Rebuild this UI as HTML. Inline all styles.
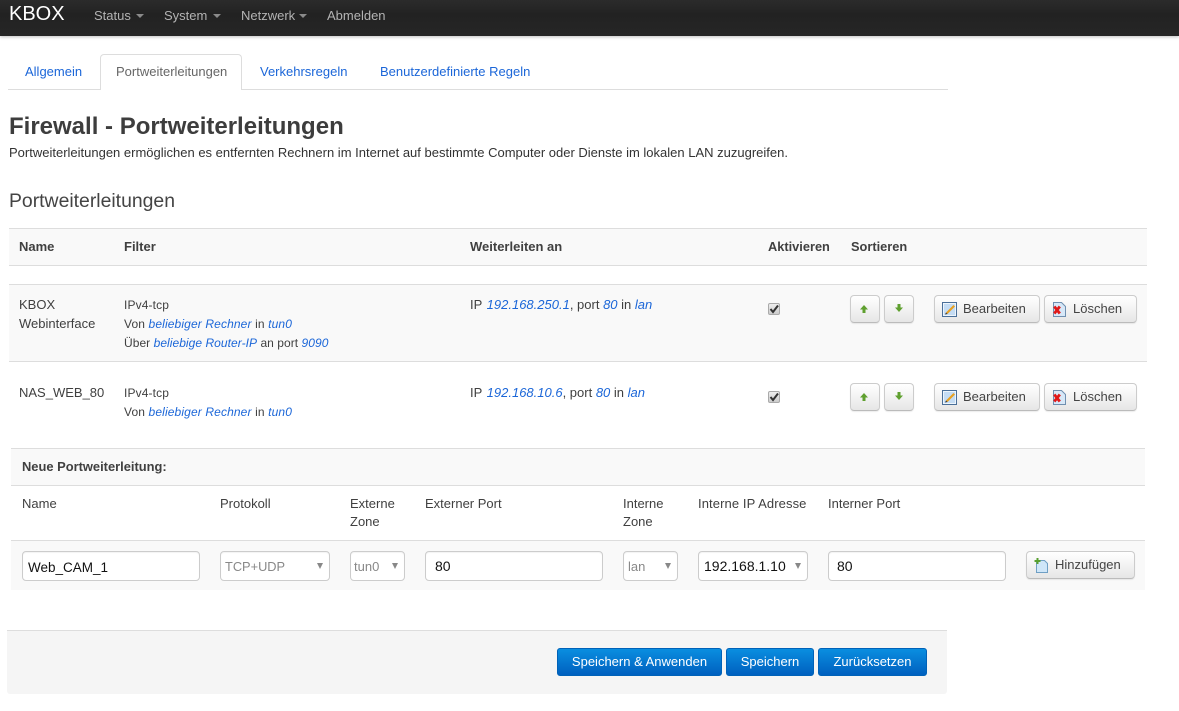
<!DOCTYPE html>
<html><head><meta charset="utf-8"><title>Firewall - Portweiterleitungen</title>
<style>
html,body{margin:0;padding:0;background:#fff;width:1179px;height:711px;overflow:hidden}
body{position:relative;font-family:"Liberation Sans",sans-serif;font-size:13px;color:#404040}
.a{position:absolute}
.t{position:absolute;white-space:nowrap;line-height:18px}
.f{font-size:12px;letter-spacing:.13px}
i{color:#1b66d8}
.nav{left:0;top:0;width:1179px;height:36px;background:linear-gradient(#2b2b2b,#222 40%,#262626);box-shadow:0 1px 3px rgba(0,0,0,.25)}
.n{color:#b3b3b3;font-size:13px;top:7px}
.car{position:absolute;width:0;height:0;border-left:4px solid transparent;border-right:4px solid transparent;border-top:4px solid #8a8a8a;top:14px}
.tab{color:#1b66d8;font-size:13px;top:63px}
.b{font-weight:bold}
.btn{position:absolute;box-sizing:border-box;height:28px;border:1px solid #ccc;border-bottom-color:#bbb;border-radius:4px;background:linear-gradient(#fff,#e6e6e6);box-shadow:0 1px 1px rgba(0,0,0,.08);color:#404040;font-size:13px;line-height:25px;white-space:nowrap}
.btn svg{position:absolute;left:7px;top:6px}
.btn span{position:absolute;top:0;color:#444}
.cb{position:absolute;width:12px;height:12px;box-sizing:border-box;border:1px solid #aaa;border-radius:2px;background:linear-gradient(#eee,#ccc)}
.cb svg{position:absolute;left:0;top:0}
.in{position:absolute;box-sizing:border-box;height:30px;border:1px solid #ccc;border-radius:4px;background:#fff;font-size:14px;color:#111;line-height:29px;padding-left:9px;white-space:nowrap;box-shadow:inset 0 1px 1px rgba(0,0,0,.05)}
.sel{padding-left:4px;font-size:13px;color:#888}
.sel:after{content:"";position:absolute;right:6px;top:11px;border-left:3px solid transparent;border-right:3px solid transparent;border-top:6px solid #888}
.blue{position:absolute;box-sizing:border-box;top:648px;height:28px;border:1px solid #0062b8;border-radius:3px;background:linear-gradient(#0a8ee0,#0060bf);color:#fff;font-size:13px;line-height:25px;text-align:center;white-space:nowrap}
</style></head><body>

<div class="a nav"></div>
<div class="t" style="left:9px;top:3px;font-size:20px;line-height:22px;color:#fff">KBOX</div>
<div class="t n" style="left:94px">Status</div><div class="car" style="left:136px"></div>
<div class="t n" style="left:164px">System</div><div class="car" style="left:213px"></div>
<div class="t n" style="left:241px">Netzwerk</div><div class="car" style="left:299px"></div>
<div class="t n" style="left:327px">Abmelden</div>

<div class="a" style="left:8px;top:89px;width:940px;height:1px;background:#ddd"></div>
<div class="a" style="left:100px;top:54px;width:142px;height:36px;box-sizing:border-box;border:1px solid #ddd;border-bottom:0;border-radius:4px 4px 0 0;background:#fff"></div>
<div class="t tab" style="left:25px">Allgemein</div>
<div class="t tab" style="left:116px;color:#666">Portweiterleitungen</div>
<div class="t tab" style="left:260px">Verkehrsregeln</div>
<div class="t tab" style="left:380px">Benutzerdefinierte Regeln</div>

<div class="t b" style="left:9px;top:113px;font-size:24px;line-height:28px;color:#3d3d3d">Firewall - Portweiterleitungen</div>
<div class="t" style="left:9px;top:144px;color:#333">Portweiterleitungen ermöglichen es entfernten Rechnern im Internet auf bestimmte Computer oder Dienste im lokalen LAN zuzugreifen.</div>
<div class="t" style="left:9px;top:189px;font-size:19.400px;line-height:24px;color:#444">Portweiterleitungen</div>

<div class="a" style="left:9px;top:228px;width:1138px;height:38px;box-sizing:border-box;background:#f9f9f9;border-top:1px solid #ddd;border-bottom:1px solid #ddd"></div>
<div class="t b" style="left:19px;top:238px">Name</div>
<div class="t b" style="left:124px;top:238px">Filter</div>
<div class="t b" style="left:470px;top:238px">Weiterleiten an</div>
<div class="t b" style="left:768px;top:238px;font-size:12.800px">Aktivieren</div>
<div class="t b" style="left:851px;top:238px;font-size:12.800px">Sortieren</div>

<div class="a" style="left:9px;top:284px;width:1138px;height:78px;box-sizing:border-box;background:#f9f9f9;border-top:1px solid #ddd;border-bottom:1px solid #ddd"></div>
<div class="t" style="left:19px;top:296px">KBOX</div>
<div class="t" style="left:19px;top:315px">Webinterface</div>
<div class="t f" style="left:124px;top:296px">IPv4-tcp</div>
<div class="t f" style="left:124px;top:315px">Von <i>beliebiger Rechner</i> in <i>tun0</i></div>
<div class="t f" style="left:124px;top:334px;letter-spacing:.05px">Über <i>beliebige Router-IP</i> an port <i>9090</i></div>
<div class="t" style="left:470px;top:296px">IP <i style="margin-left:1px">192.168.250.1</i>, port <i>80</i> in <i>lan</i></div>

<div class="t" style="left:19px;top:384px">NAS_WEB_80</div>
<div class="t f" style="left:124px;top:384px">IPv4-tcp</div>
<div class="t f" style="left:124px;top:403px">Von <i>beliebiger Rechner</i> in <i>tun0</i></div>
<div class="t" style="left:470px;top:384px">IP <i style="margin-left:1px">192.168.10.6</i>, port <i>80</i> in <i>lan</i></div>

<!-- Row 1 controls -->
<div class="cb" style="left:768px;top:303px"><svg width="10" height="10" viewBox="0 0 10 10"><path d="M1.500 5l2.500 3L9 1.500" fill="none" stroke="#333" stroke-width="2"/></svg></div>
<div class="btn" style="left:850px;top:295px;width:30px"><svg style="left:7px;top:7px" width="12" height="12" viewBox="0 0 12 12"><path d="M6 2L10 6.500H7.500V10h-3V6.500H2z" fill="#5fa02f"/></svg></div>
<div class="btn" style="left:884px;top:295px;width:30px"><svg style="left:8px;top:6px" width="12" height="12" viewBox="0 0 12 12"><path d="M4.500 2h3v3.500H10L6 10 2 5.500h2.500z" fill="#5fa02f"/></svg></div>
<div class="btn" style="left:934px;top:295px;width:106px"><svg width="15" height="15" viewBox="0 0 15 15"><rect x=".5" y=".5" width="14" height="14" fill="#c4dcf4" stroke="#4a6f99"/><rect x="1.500" y="1.500" width="12" height="12" fill="none" stroke="#fff" stroke-opacity=".7"/><path d="M4 10.500L11.500 3l1.500 1.500L5.500 12z" fill="#e8a020"/><path d="M3 12.500l1-2 1.500 1.500z" fill="#333"/></svg><span style="left:28px">Bearbeiten</span></div>
<div class="btn" style="left:1044px;top:295px;width:93px"><svg width="15" height="15" viewBox="0 0 15 15"><path d="M1.500 .5h8l4 4v10h-12z" fill="#d7e8f8" stroke="#6f8fb0"/><path d="M2.300 4.500l5.500 7M7.800 4.500l-5.500 7" stroke="#e01818" stroke-width="2.800"/></svg><span style="left:28px">Löschen</span></div>

<!-- Row 2 controls -->
<div class="cb" style="left:768px;top:391px"><svg width="10" height="10" viewBox="0 0 10 10"><path d="M1.500 5l2.500 3L9 1.500" fill="none" stroke="#333" stroke-width="2"/></svg></div>
<div class="btn" style="left:850px;top:383px;width:30px"><svg style="left:7px;top:7px" width="12" height="12" viewBox="0 0 12 12"><path d="M6 2L10 6.500H7.500V10h-3V6.500H2z" fill="#5fa02f"/></svg></div>
<div class="btn" style="left:884px;top:383px;width:30px"><svg style="left:8px;top:6px" width="12" height="12" viewBox="0 0 12 12"><path d="M4.500 2h3v3.500H10L6 10 2 5.500h2.500z" fill="#5fa02f"/></svg></div>
<div class="btn" style="left:934px;top:383px;width:106px"><svg width="15" height="15" viewBox="0 0 15 15"><rect x=".5" y=".5" width="14" height="14" fill="#c4dcf4" stroke="#4a6f99"/><rect x="1.500" y="1.500" width="12" height="12" fill="none" stroke="#fff" stroke-opacity=".7"/><path d="M4 10.500L11.500 3l1.500 1.500L5.500 12z" fill="#e8a020"/><path d="M3 12.500l1-2 1.500 1.500z" fill="#333"/></svg><span style="left:28px">Bearbeiten</span></div>
<div class="btn" style="left:1044px;top:383px;width:93px"><svg width="15" height="15" viewBox="0 0 15 15"><path d="M1.500 .5h8l4 4v10h-12z" fill="#d7e8f8" stroke="#6f8fb0"/><path d="M2.300 4.500l5.500 7M7.800 4.500l-5.500 7" stroke="#e01818" stroke-width="2.800"/></svg><span style="left:28px">Löschen</span></div>

<!-- New section -->
<div class="a" style="left:11px;top:448px;width:1134px;height:38px;box-sizing:border-box;background:#f9f9f9;border-top:1px solid #ddd;border-bottom:1px solid #ddd"></div>
<div class="t b" style="left:22px;top:458px;color:#404040;font-size:12.900px">Neue Portweiterleitung:</div>
<div class="t" style="left:22px;top:495px">Name</div>
<div class="t" style="left:220px;top:495px">Protokoll</div>
<div class="t" style="left:350px;top:495px">Externe</div>
<div class="t" style="left:350px;top:513px">Zone</div>
<div class="t" style="left:425px;top:495px">Externer Port</div>
<div class="t" style="left:623px;top:495px">Interne</div>
<div class="t" style="left:623px;top:513px">Zone</div>
<div class="t" style="left:698px;top:495px;letter-spacing:.1px">Interne IP Adresse</div>
<div class="t" style="left:828px;top:495px">Interner Port</div>

<div class="a" style="left:11px;top:540px;width:1134px;height:50px;box-sizing:border-box;background:#f9f9f9;border-top:1px solid #ddd"></div>
<div class="in" style="left:22px;top:551px;width:178px;padding-left:5px;font-size:13.500px;line-height:31px">Web_CAM_1</div>
<div class="in sel" style="left:220px;top:551px;width:110px;font-size:12.800px">TCP+UDP</div>
<div class="in sel" style="left:350px;top:551px;width:55px;padding-left:3px">tun0</div>
<div class="in" style="left:425px;top:551px;width:178px">80</div>
<div class="in sel" style="left:623px;top:551px;width:55px">lan</div>
<div class="in sel" style="left:698px;top:551px;width:110px;color:#111;font-size:14px;padding-left:5px">192.168.1.10</div>
<div class="in" style="left:828px;top:551px;width:178px;padding-left:8px">80</div>
<div class="btn" style="left:1026px;top:551px;width:109px"><svg width="15" height="15" viewBox="0 0 15 15"><path d="M2.500 2.500h8l3 3v9h-11z" fill="#cfe6f8" stroke="#6f9fc4"/><path d="M3.500 0v6M.5 3h6" stroke="#58a030" stroke-width="2"/></svg><span style="left:28px">Hinzufügen</span></div>

<!-- Footer -->
<div class="a" style="left:7px;top:630px;width:940px;height:64px;box-sizing:border-box;background:#f5f5f5;border-top:1px solid #ddd;border-radius:0 0 3px 3px"></div>
<div class="blue" style="left:557px;width:165px">Speichern &amp; Anwenden</div>
<div class="blue" style="left:726px;width:88px">Speichern</div>
<div class="blue" style="left:818px;width:109px">Zurücksetzen</div>

</body></html>
